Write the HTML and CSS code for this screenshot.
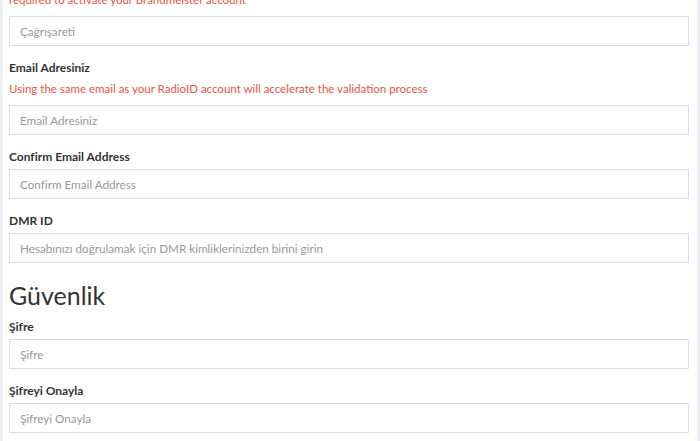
FILE: index.html
```html
<!DOCTYPE html>
<html lang="tr">
<head>
<meta charset="utf-8">
<title>Kayıt</title>
<link rel="stylesheet" href="styles.css">
</head>
<body>
<div class="page">
  <div class="box">
    <p class="help first">required to activate your Brandmeister account</p>
    <div class="group">
      <input class="field" type="text" placeholder="Çağrışareti">
    </div>
    <div class="group">
      <label class="label">Email Adresiniz</label>
      <p class="help">Using the same email as your RadioID account will accelerate the validation process</p>
      <input class="field" type="text" placeholder="Email Adresiniz">
    </div>
    <div class="group">
      <label class="label">Confirm Email Address</label>
      <input class="field" type="text" placeholder="Confirm Email Address">
    </div>
    <div class="group">
      <label class="label">DMR ID</label>
      <input class="field" type="text" placeholder="Hesabınızı doğrulamak için DMR kimliklerinizden birini girin">
    </div>
    <h3 class="section">Güvenlik</h3>
    <div class="group">
      <label class="label">Şifre</label>
      <input class="field" type="text" placeholder="Şifre">
    </div>
    <div class="group last">
      <label class="label">Şifreyi Onayla</label>
      <input class="field" type="text" placeholder="Şifreyi Onayla">
    </div>
  </div>
</div>
</body>
</html>
```
FILE: styles.css
```css
html, body {
  margin: 0;
  padding: 0;
  background: #ecf0f5;
  overflow: hidden;
}
body {
  font-family: "Lato", "Liberation Sans", sans-serif;
  color: #333;
}
.page {
  padding: 0 3px;
  margin-top: -9px;
}
.box {
  background: #fff;
  padding: 0 8px 9px 6px;
}
.help {
  margin: 0 0 8px;
  font-size: 11.5px;
  line-height: 17px;
  color: #e8553f;
}
.group {
  margin-bottom: 13px;
}
.group.last {
  margin-bottom: 0;
}
.label {
  display: block;
  font-size: 12px;
  line-height: 17px;
  font-weight: 700;
  margin-bottom: 4px;
  color: #333;
}
.field {
  display: block;
  box-sizing: border-box;
  width: 100%;
  height: 30px;
  border: 1px solid #dcdde5;
  border-radius: 0;
  padding: 0 10px;
  font-family: inherit;
  font-size: 11.7px;
  color: #555;
  background: #fff;
  outline: none;
}
.field::placeholder {
  color: #999;
}
.section {
  margin: 0 0 7px;
  padding-top: 3px;
  font-size: 25px;
  line-height: 32px;
  font-weight: 400;
  color: #333;
}
```
